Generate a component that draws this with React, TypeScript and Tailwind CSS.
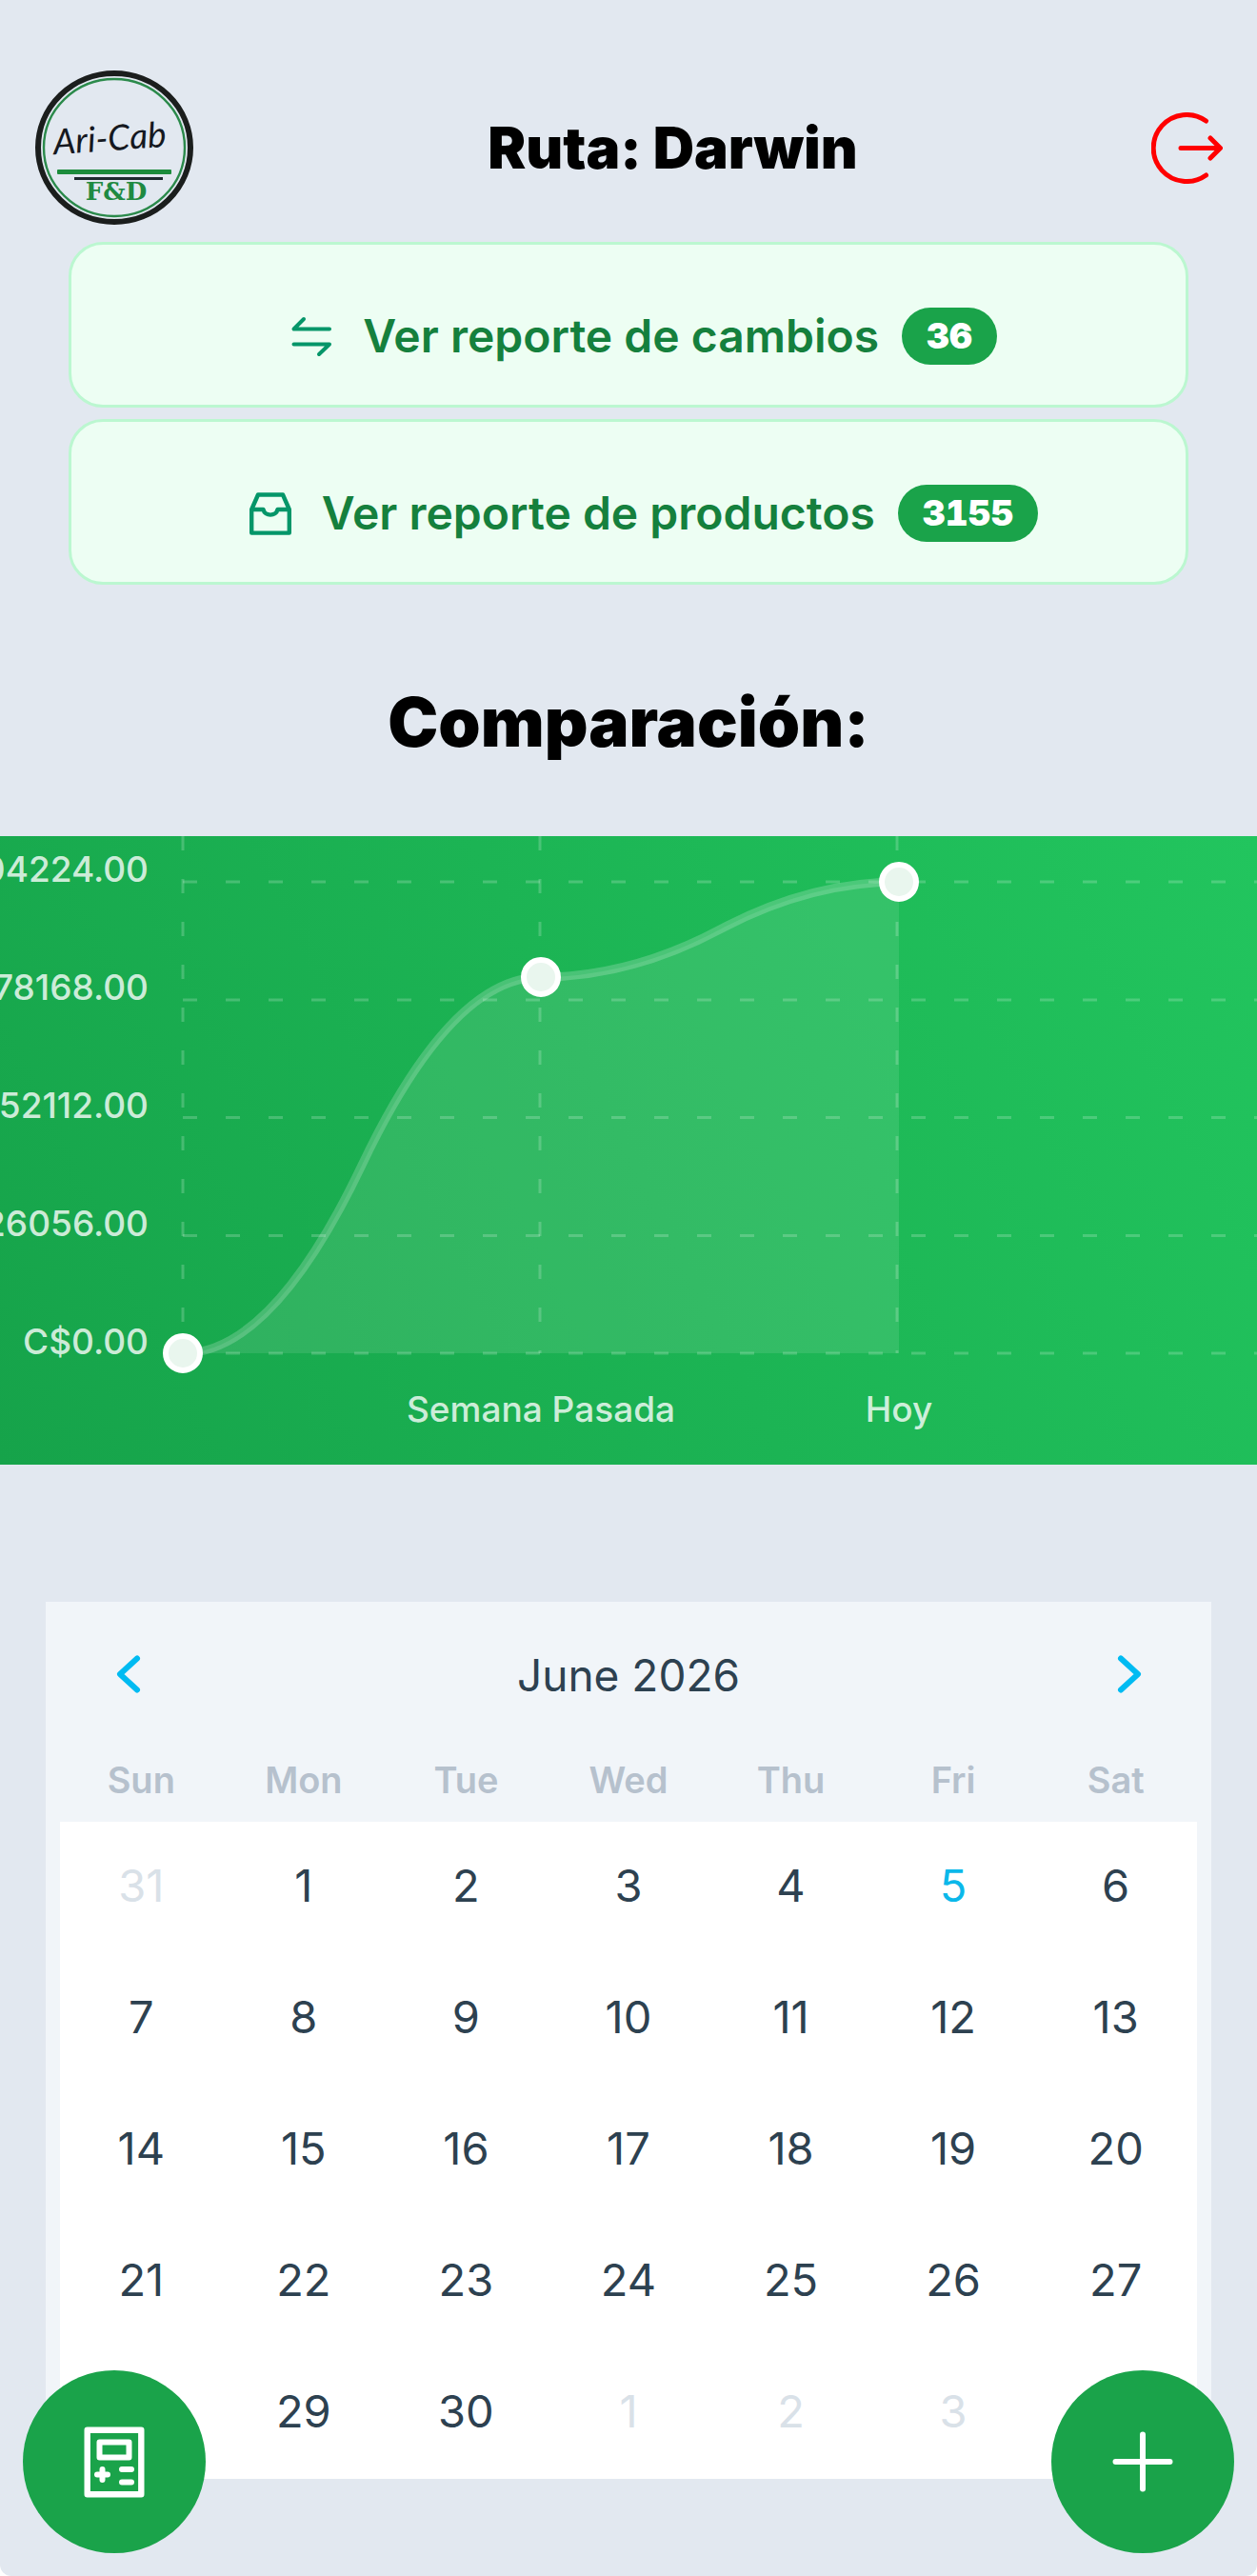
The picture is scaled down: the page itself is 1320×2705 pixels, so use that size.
import { useState } from "react";

type Point = { x: number; y: number };

type Day = {
  day: number;
  otherMonth?: boolean;
};

const WEEKDAYS = ["Sun", "Mon", "Tue", "Wed", "Thu", "Fri", "Sat"];
const MONTHS = [
  "January",
  "February",
  "March",
  "April",
  "May",
  "June",
  "July",
  "August",
  "September",
  "October",
  "November",
  "December",
];
const TODAY = { year: 2026, month: 5, day: 5 };

const Y_LABELS = [
  { text: "C$104224.00", y: 48 },
  { text: "C$78168.00", y: 172 },
  { text: "C$52112.00", y: 296 },
  { text: "C$26056.00", y: 420 },
  { text: "C$0.00", y: 544 },
];
const X_LINES = [192, 567, 942];
const POINTS: Point[] = [
  { x: 192, y: 543 },
  { x: 568, y: 148 },
  { x: 944, y: 48 },
];

// Smooth curve: two quadratics per segment, meeting at its midpoint
const curvePath = (points: Point[]) => {
  let d = `M${points[0].x} ${points[0].y}`;
  for (let i = 0; i < points.length - 1; i++) {
    const a = points[i];
    const b = points[i + 1];
    const mx = (a.x + b.x) / 2;
    const my = (a.y + b.y) / 2;
    d += ` Q${(a.x + mx) / 2} ${a.y} ${mx} ${my}`;
    d += ` Q${(b.x + mx) / 2} ${b.y} ${b.x} ${b.y}`;
  }
  return d;
};

const getWeeks = (year: number, month: number): Day[][] => {
  const first = new Date(year, month, 1).getDay();
  const total = new Date(year, month + 1, 0).getDate();
  const prevTotal = new Date(year, month, 0).getDate();
  const days: Day[] = [];
  for (let i = first - 1; i >= 0; i--) {
    days.push({ day: prevTotal - i, otherMonth: true });
  }
  for (let i = 1; i <= total; i++) days.push({ day: i });
  for (let i = 1; days.length % 7 !== 0; i++) {
    days.push({ day: i, otherMonth: true });
  }
  const weeks: Day[][] = [];
  for (let i = 0; i < days.length; i += 7) weeks.push(days.slice(i, i + 7));
  return weeks;
};

function Logo() {
  return (
    <svg viewBox="0 0 168 162" className="w-[168px] h-[162px] shrink-0" role="img" aria-label="Ari-Cab F&D">
      <ellipse cx="84" cy="81" rx="80" ry="78" fill="none" stroke="#1b1e1d" strokeWidth="6" />
      <ellipse cx="84" cy="81" rx="74" ry="72" fill="none" stroke="#2b8a4b" strokeWidth="2.4" />
      <text
        x="80"
        y="84"
        textAnchor="middle"
        fontSize="37"
        fontStyle="italic"
        fontWeight="400"
        fontFamily="Lato, sans-serif"
        fill="#151820"
        transform="rotate(-4 80 84)"
      >
        Ari-Cab
      </text>
      <rect x="24" y="104" width="120" height="5" rx="1" fill="#1c8c3c" />
      <rect x="42" y="112" width="93" height="3" fill="#1f2a30" />
      <text
        x="86"
        y="136"
        textAnchor="middle"
        fontSize="26"
        fontWeight="700"
        fontFamily="'DejaVu Serif', serif"
        fill="#1f8a42"
      >
        F&amp;D
      </text>
    </svg>
  );
}

function LogoutIcon() {
  return (
    <svg
      viewBox="0 0 75 75"
      className="w-[75px] h-[75px]"
      fill="none"
      stroke="#ff0000"
      strokeWidth="5"
      strokeLinecap="round"
      strokeLinejoin="round"
    >
      <path d="M57.5 9 A35 35 0 1 0 57.5 66" />
      <path d="M31 37.5 H72 M62 27 L72.5 37.5 L62 48" />
    </svg>
  );
}

function SwapIcon() {
  return (
    <svg
      viewBox="0 0 60 60"
      className="w-[60px] h-[60px] m-6 text-[#059669]"
      fill="none"
      stroke="currentColor"
      strokeWidth="4"
      strokeLinecap="round"
      strokeLinejoin="round"
    >
      <path d="M22 12 L11.5 22.5 H49" />
      <path d="M11.5 38.5 H49 L38 49" />
    </svg>
  );
}

function InboxIcon() {
  return (
    <svg
      viewBox="0 0 60 60"
      className="w-[60px] h-[60px] m-6 text-[#059669]"
      fill="none"
      stroke="currentColor"
      strokeWidth="4.4"
      strokeLinejoin="round"
    >
      <path d="M10.2 26 L17 10.5 H43 L49.8 26 V50.6 H10.2 Z" />
      <path d="M10.2 26 H22.5 C24 33.5 36 33.5 37.5 26 H49.8" />
    </svg>
  );
}

function ReportButton({
  icon,
  label,
  count,
}: {
  icon: React.ReactNode;
  label: string;
  count: number;
}) {
  return (
    <button className="w-full flex items-center justify-center pt-[42px] pb-[18px] rounded-[36px] border-3 border-[#bbf7d0] bg-[#edfef3]">
      {icon}
      <span className="text-[48px] leading-[60px] font-semibold text-[#15803d]">
        {label}
      </span>
      <span className="ml-6 px-[26px] rounded-full bg-[#1aa34a] text-white text-[37px] leading-[60px] font-black tabular-nums">
        {count}
      </span>
    </button>
  );
}

function ComparisonChart() {
  const curve = curvePath(POINTS);

  return (
    <svg viewBox="0 0 1320 660" className="block w-full" role="img" aria-label="Comparación">
      <defs>
        <linearGradient id="chartBg" gradientUnits="userSpaceOnUse" x1="0" y1="660" x2="1320" y2="0">
          <stop offset="0" stopColor="#16a34a" />
          <stop offset="1" stopColor="#22c55e" />
        </linearGradient>
      </defs>
      <rect width="1320" height="660" fill="url(#chartBg)" />
      <g stroke="#ffffff" strokeOpacity="0.2" strokeWidth="3" strokeDasharray="15 30">
        {[48, 172, 295.5, 419.5, 543].map((y) => (
          <line key={y} x1="192" x2="1320" y1={y} y2={y} />
        ))}
        {X_LINES.map((x) => (
          <line key={x} x1={x} x2={x} y1="0" y2="543" />
        ))}
      </g>
      <path d={`${curve} L944 543 L192 543 Z`} fill="#ffffff" fillOpacity="0.1" />
      <path d={curve} fill="none" stroke="#ffffff" strokeOpacity="0.2" strokeWidth="9" />
      {POINTS.map((p) => (
        <circle key={p.x} cx={p.x} cy={p.y} r="18" fill="#e9f6ee" stroke="#ffffff" strokeWidth="6" />
      ))}
      <g fill="#ffffff" fillOpacity="0.8" fontSize="37" fontWeight="500">
        {Y_LABELS.map((l) => (
          <text key={l.text} x="156" y={l.y} textAnchor="end">
            {l.text}
          </text>
        ))}
        <text x="568" y="615" textAnchor="middle">
          Semana Pasada
        </text>
        <text x="944" y="615" textAnchor="middle">
          Hoy
        </text>
      </g>
    </svg>
  );
}

function Chevron({ d }: { d: string }) {
  return (
    <svg
      viewBox="0 0 72 72"
      className="w-[72px] h-[72px]"
      fill="none"
      stroke="#00bbf2"
      strokeWidth="6"
      strokeLinecap="round"
      strokeLinejoin="round"
    >
      <path d={d} />
    </svg>
  );
}

function Calendar() {
  const [view, setView] = useState({ year: TODAY.year, month: TODAY.month });
  const weeks = getWeeks(view.year, view.month);

  const move = (step: number) => {
    const next = new Date(view.year, view.month + step, 1);
    setView({ year: next.getFullYear(), month: next.getMonth() });
  };

  const dayColor = (d: Day) => {
    if (d.otherMonth) return "text-[#d9e1e8]";
    const isToday =
      d.day === TODAY.day && view.month === TODAY.month && view.year === TODAY.year;
    return isToday ? "text-[#0bb8ea]" : "text-[#2d4150]";
  };

  return (
    <section className="mx-12 mt-36 px-[15px] bg-slate-100">
      <div className="h-[154px] px-9 flex items-center justify-between">
        <button aria-label="Previous month" onClick={() => move(-1)}>
          <Chevron d="M45 18.5 L27 35 L45 51.5" />
        </button>
        <h3 className="text-[46px] text-[#2d4150]">
          {MONTHS[view.month]} {view.year}
        </h3>
        <button aria-label="Next month" onClick={() => move(1)}>
          <Chevron d="M28 18.5 L46 35 L28 51.5" />
        </button>
      </div>

      <table className="w-full table-fixed">
        <thead>
          <tr className="h-[77px]">
            {WEEKDAYS.map((name) => (
              <th key={name} className="p-0 pb-3 text-[38px] leading-[64px] font-semibold text-[#b6c1cd]">
                {name}
              </th>
            ))}
          </tr>
        </thead>
        <tbody className="bg-white">
          {weeks.map((week, i) => (
            <tr key={i} className="h-[138px]">
              {week.map((d, j) => (
                <td key={j} className="p-0">
                  <button
                    className={`block w-full pb-1 text-center text-[47px] leading-[60px] ${dayColor(d)}`}
                  >
                    {d.day}
                  </button>
                </td>
              ))}
            </tr>
          ))}
        </tbody>
      </table>
    </section>
  );
}

export default function App() {
  return (
    <div className="bg-white font-[Inter,sans-serif]">
      <main className="min-h-screen bg-slate-200 pt-[74px] pb-[102px] rounded-b-xl">
        <header className="px-9 flex items-center justify-between">
          <Logo />
          <h1 className="text-[60px] leading-none font-black text-black">
            Ruta: Darwin
          </h1>
          <button aria-label="Cerrar sesión">
            <LogoutIcon />
          </button>
        </header>

        <div className="mx-[72px] mt-[18px] flex flex-col gap-3">
          <ReportButton icon={<SwapIcon />} label="Ver reporte de cambios" count={36} />
          <ReportButton icon={<InboxIcon />} label="Ver reporte de productos" count={3155} />
        </div>

        <h2 className="mt-[108px] mb-[84px] text-center text-[71px] leading-[72px] font-black text-black">
          Comparación:
        </h2>

        <ComparisonChart />
        <Calendar />
      </main>

      {/* Floating actions */}
      <button
        aria-label="Calculadora"
        className="fixed left-6 bottom-6 w-48 h-48 rounded-full bg-[#1aa34a] flex items-center justify-center"
      >
        <svg viewBox="0 0 64 75" className="w-16 h-[75px]" fill="none" stroke="#ffffff" strokeWidth="6.4" strokeLinejoin="round">
          <rect x="3.7" y="3.7" width="56.6" height="67.6" />
          <rect x="16.5" y="16.5" width="31" height="16" strokeWidth="6" />
          <path
            d="M14 50.5 H25 M19.5 45 V56 M40 45 H50 M40 58.5 H50"
            strokeWidth="6"
            strokeLinecap="round"
          />
        </svg>
      </button>
      <button
        aria-label="Agregar"
        className="fixed right-6 bottom-6 w-48 h-48 rounded-full bg-[#1aa34a] flex items-center justify-center"
      >
        <svg viewBox="0 0 64 64" className="w-16 h-16" fill="none" stroke="#ffffff" strokeWidth="6" strokeLinecap="round">
          <path d="M32 3.5 V60.5 M3.5 32 H60.5" />
        </svg>
      </button>
    </div>
  );
}
